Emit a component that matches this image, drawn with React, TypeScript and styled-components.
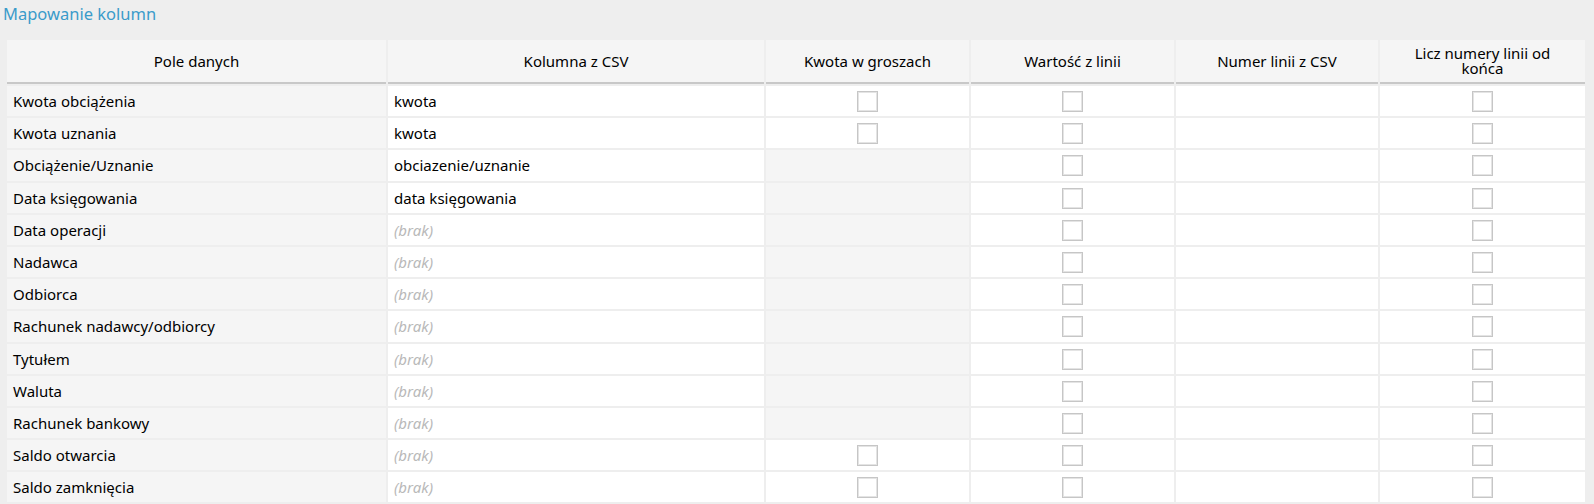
import React from 'react';
import styled, { createGlobalStyle } from 'styled-components';

const GlobalStyle = createGlobalStyle`
  html, body {
    margin: 0;
    padding: 0;
    background: #eeeeee;
  }
  body {
    font-family: 'Noto Sans', 'Open Sans', sans-serif;
    color: #000;
  }
`;

const Page = styled.div`
  padding: 0 7px 0 5px;
`;

const Title = styled.h2`
  margin: 0 0 0 -2px;
  height: 38px;
  padding-top: 3px;
  box-sizing: border-box;
  font-size: 16.5px;
  font-weight: normal;
  line-height: 22px;
  color: #3a9bca;
`;

const MappingTable = styled.table`
  width: 1582px;
  table-layout: fixed;
  border-collapse: separate;
  border-spacing: 2px;
  font-size: 15px;
`;

const HeadCell = styled.th`
  height: 42px;
  padding: 0 20px;
  background: #f5f5f5;
  border-bottom: 2px solid #c8c8c8;
  font-weight: normal;
  line-height: 15px;
  text-align: center;
  vertical-align: middle;
  color: #000;
`;

const Cell = styled.td<{ $muted?: boolean }>`
  height: 30.2px;
  padding: 0 6px;
  box-sizing: border-box;
  background: ${(p) => (p.$muted ? '#f5f5f5' : '#ffffff')};
  vertical-align: middle;
  white-space: nowrap;
`;

const CheckCell = styled(Cell)`
  text-align: center;
  padding: 0;
`;

const Empty = styled.span`
  color: #b9b9b9;
  font-style: italic;
`;

const Box = styled.input`
  appearance: none;
  display: block;
  margin: 1px auto 0;
  width: 21px;
  height: 21px;
  box-sizing: border-box;
  border: 1px solid #c6c6c6;
  box-shadow: inset 0 0 0 1px #e4e4e4;
  background: #fff;
  border-radius: 0;
`;

type Row = {
  field: string;
  column?: string;
  grosze: boolean;
};

const rows: Row[] = [
  { field: 'Kwota obciążenia', column: 'kwota', grosze: true },
  { field: 'Kwota uznania', column: 'kwota', grosze: true },
  { field: 'Obciążenie/Uznanie', column: 'obciazenie/uznanie', grosze: false },
  { field: 'Data księgowania', column: 'data księgowania', grosze: false },
  { field: 'Data operacji', grosze: false },
  { field: 'Nadawca', grosze: false },
  { field: 'Odbiorca', grosze: false },
  { field: 'Rachunek nadawcy/odbiorcy', grosze: false },
  { field: 'Tytułem', grosze: false },
  { field: 'Waluta', grosze: false },
  { field: 'Rachunek bankowy', grosze: false },
  { field: 'Saldo otwarcia', grosze: true },
  { field: 'Saldo zamknięcia', grosze: true },
];

const App = () => {
  return (
    <>
      <GlobalStyle />
      <Page>
        <Title>Mapowanie kolumn</Title>
        <MappingTable>
          <colgroup>
            <col style={{ width: 379 }} />
            <col style={{ width: 376 }} />
            <col style={{ width: 203 }} />
            <col style={{ width: 203 }} />
            <col style={{ width: 202 }} />
            <col style={{ width: 205 }} />
          </colgroup>
          <thead>
            <tr>
              <HeadCell>Pole danych</HeadCell>
              <HeadCell>Kolumna z CSV</HeadCell>
              <HeadCell>Kwota w groszach</HeadCell>
              <HeadCell>Wartość z linii</HeadCell>
              <HeadCell>Numer linii z CSV</HeadCell>
              <HeadCell>Licz numery linii od końca</HeadCell>
            </tr>
          </thead>
          <tbody>
            {rows.map((row) => (
              <tr key={row.field}>
                <Cell $muted>{row.field}</Cell>
                <Cell>{row.column ? row.column : <Empty>(brak)</Empty>}</Cell>
                {row.grosze ? (
                  <CheckCell>
                    <Box type="checkbox" />
                  </CheckCell>
                ) : (
                  <CheckCell $muted />
                )}
                <CheckCell>
                  <Box type="checkbox" />
                </CheckCell>
                <Cell />
                <CheckCell>
                  <Box type="checkbox" />
                </CheckCell>
              </tr>
            ))}
          </tbody>
        </MappingTable>
      </Page>
    </>
  );
};

export default App;
